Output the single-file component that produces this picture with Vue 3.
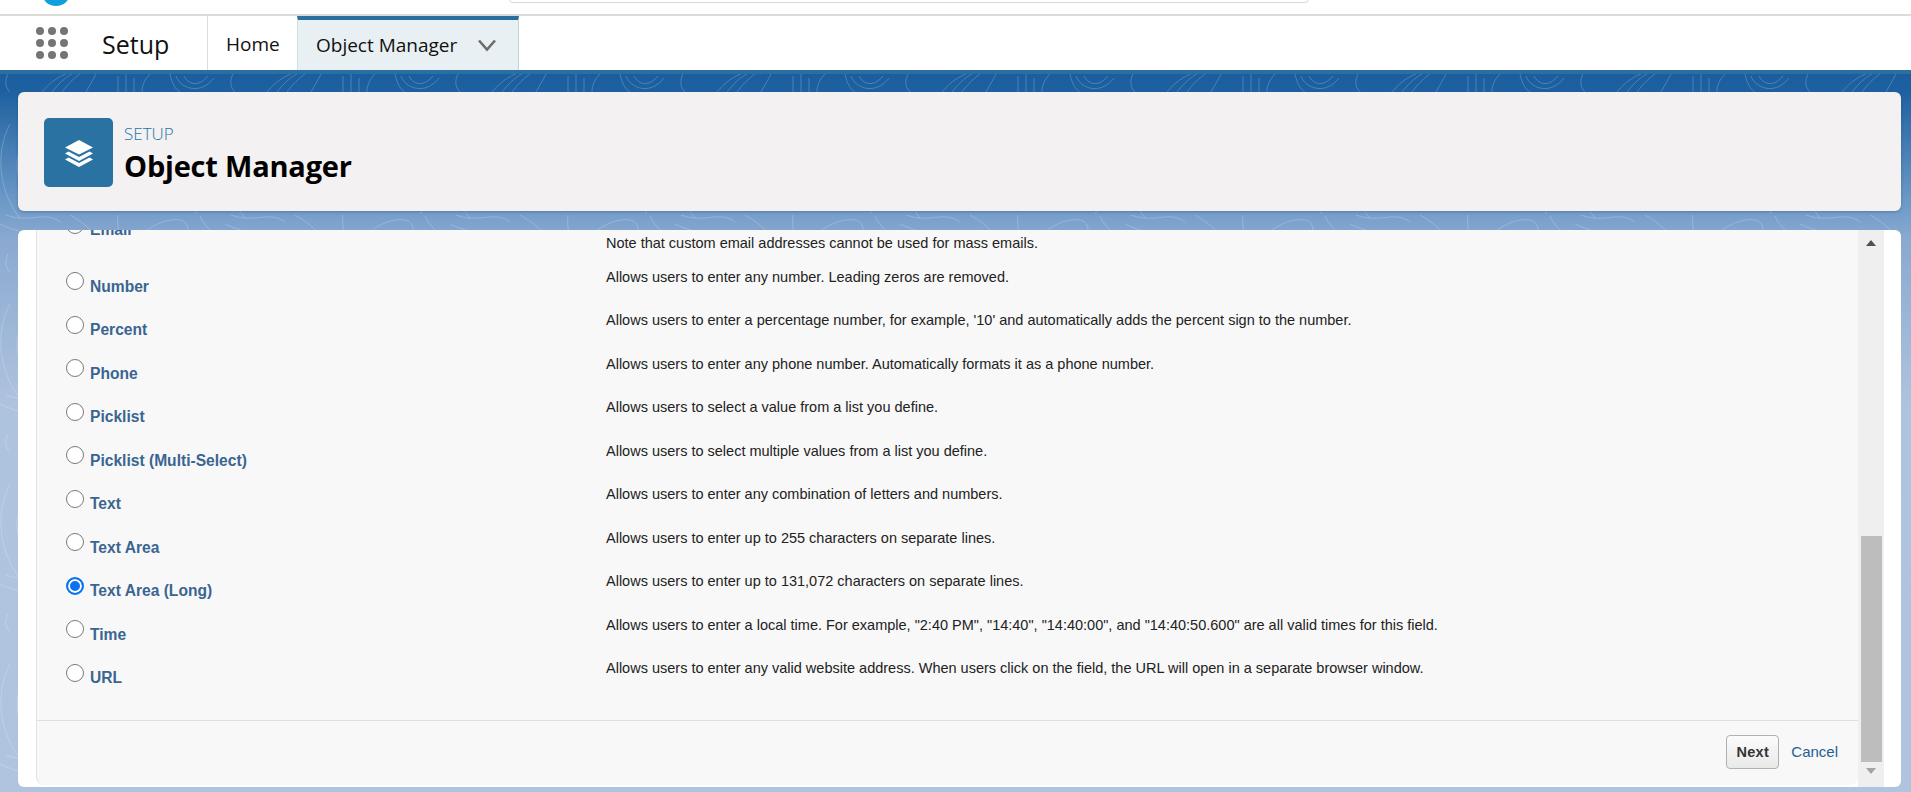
<script setup>
const rows = [
  { label: 'Number', desc: 'Allows users to enter any number. Leading zeros are removed.' },
  { label: 'Percent', desc: "Allows users to enter a percentage number, for example, '10' and automatically adds the percent sign to the number." },
  { label: 'Phone', desc: 'Allows users to enter any phone number. Automatically formats it as a phone number.' },
  { label: 'Picklist', desc: 'Allows users to select a value from a list you define.' },
  { label: 'Picklist (Multi-Select)', desc: 'Allows users to select multiple values from a list you define.' },
  { label: 'Text', desc: 'Allows users to enter any combination of letters and numbers.' },
  { label: 'Text Area', desc: 'Allows users to enter up to 255 characters on separate lines.' },
  { label: 'Text Area (Long)', desc: 'Allows users to enter up to 131,072 characters on separate lines.', checked: true },
  { label: 'Time', desc: 'Allows users to enter a local time. For example, "2:40 PM", "14:40", "14:40:00", and "14:40:50.600" are all valid times for this field.' },
  { label: 'URL', desc: 'Allows users to enter any valid website address. When users click on the field, the URL will open in a separate browser window.' },
]
</script>

<template>
  <div class="page">
    <div class="topbar"><span class="logo"></span><span class="search"></span></div>
    <nav class="nav">
      <div class="launcher">
        <svg width="34" height="32" viewBox="0 0 34 32" fill="#757575">
          <template v-for="y in [4,16,28]" :key="y">
            <circle v-for="x in [4,16,28]" :key="x" :cx="x" :cy="y" r="4" />
          </template>
        </svg>
      </div>
      <div class="app-name">Setup</div>
      <div class="tab home">Home</div>
      <div class="tab active">
        <span>Object Manager</span>
        <svg width="20" height="14" viewBox="0 0 20 14" fill="none" stroke="#6f6d6b" stroke-width="2.6"><path d="M2 2.500l8 9 8-9" /></svg>
      </div>
    </nav>
    <main class="stage">
      <svg class="topo" width="1911" height="718" aria-hidden="true">
        <defs>
          <pattern id="topo" width="225" height="180" patternUnits="userSpaceOnUse">
            <g fill="none" stroke="#fff" stroke-opacity=".2" stroke-width="1">
              <path d="M8 0C4 8 6 14 10 18M42 18C50 8 60 2 66 0M52 18C60 8 66 3 72 0M62 18C68 10 74 4 80 0M96 0C92 8 88 14 86 18M118 2V18M126 0V18M134 4V18M150 0C144 6 142 12 142 18M176 2C180 14 200 22 214 4M184 2C188 10 198 14 208 2M170 0C172 10 176 16 180 18" />
              <path d="M6 141C30 150 44 136 60 148M70 141C86 150 96 160 100 170M118 141C116 152 122 160 114 170M136 170C146 150 170 144 180 146C190 148 190 160 184 170M200 142C204 152 214 160 225 168M0 150C20 160 36 158 44 170" />
              <path d="M30 60C10 80 14 110 36 130M10 50C-6 80 0 120 20 144M190 40C215 70 215 110 195 140" />
            </g>
          </pattern>
        </defs>
        <rect width="1911" height="718" fill="url(#topo)" />
      </svg>
      <header class="head">
        <div class="obj-icon">
          <svg width="34" height="34" viewBox="0 0 34 34" fill="#fff">
            <path d="M17 4L31 11.500 17 18.500 3 11.500Z" />
            <path d="M6.500 15.500L3 17.500 17 25 31 17.500 27.500 15.500 17 21Z" />
            <path d="M6.500 21.500L3 23.500 17 31 31 23.500 27.500 21.500 17 27Z" />
          </svg>
        </div>
        <div class="titles">
          <div class="eyebrow">SETUP</div>
          <h1>Object Manager</h1>
        </div>
      </header>
      <section class="card">
        <div class="inner">
          <div class="scroll-area">
            <div class="list">
              <div class="row email">
                <div class="type"><span class="radio"></span><span class="lbl">Email</span></div>
                <div class="desc">Note that custom email addresses cannot be used for mass emails.</div>
              </div>
              <div v-for="r in rows" :key="r.label" class="row">
                <div class="type">
                  <span class="radio" :class="{ on: r.checked }"></span>
                  <span class="lbl">{{ r.label }}</span>
                </div>
                <div class="desc">{{ r.desc }}</div>
              </div>
            </div>
          </div>
          <footer class="foot">
            <button class="next">Next</button>
            <a class="cancel">Cancel</a>
          </footer>
        </div>
        <div class="scrollbar">
          <span class="arrow up"></span>
          <span class="thumb"></span>
          <span class="arrow down"></span>
        </div>
      </section>
    </main>
  </div>
</template>

<style>
html, body { margin: 0; background: #fff; overflow: hidden; }
</style>

<style scoped>
.page { width: 1911px; height: 792px; display: flex; flex-direction: column; overflow: hidden; font-family: "Liberation Sans", Arial, sans-serif; }
.topbar { height: 14px; flex: none; border-bottom: 2px solid #dddbda; position: relative; display: flex; background: #fff; }
.logo { position: absolute; left: 42px; top: -20px; width: 28px; height: 26px; border-radius: 50%; background: #11a0de; }
.search { position: absolute; left: 509px; top: -10px; width: 798px; height: 11px; border: 1px solid #d8d8d8; border-radius: 4px; }
.nav { height: 54px; flex: none; display: flex; align-items: stretch; background: #fff; font-family: "Open Sans", sans-serif; color: #111; }
.launcher { width: 102px; padding: 11px 0 0 36px; box-sizing: border-box; flex: none; }
.app-name { width: 106px; box-sizing: border-box; font-size: 25px; line-height: 56px; flex: none; border-right: 1px solid #dddbda; }
.tab { font-size: 19px; line-height: 56px; flex: none; box-sizing: border-box; }
.home { width: 89px; padding-left: 18px; }
.active { width: 222px; padding-left: 18px; display: flex; align-items: center; gap: 20px; background: #e9f0f4; border-top: 4px solid #2a6f9f; border-left: 1px solid #d5dbdf; border-right: 1px solid #c9d0d5; line-height: 46px; }
.stage { flex: 1; position: relative; display: flex; flex-direction: column; gap: 19px; padding: 18px 10px 5px 18px; box-sizing: border-box; min-height: 0; border-top: 4px solid #2a6f9f; background: linear-gradient(180deg, #1b5e9f 0, #1e61a1 18px, #6e9ac8 130px, #8aa9d0 165px, #aec3de 330px, #b0c4df 718px); }
.topo { position: absolute; left: 0; top: 0; }
.head { position: relative; height: 119px; flex: none; display: flex; align-items: center; gap: 11px; padding: 2px 0 0 26px; box-sizing: border-box; background: #f3f1f2; border-radius: 6px; box-shadow: 0 1px 3px rgba(40, 60, 90, .35); }
.obj-icon { width: 69px; height: 69px; border-radius: 5px; background: #2a72a1; display: flex; align-items: center; justify-content: center; }
.titles { display: flex; flex-direction: column; color: #000; margin-top: 4px; }
.eyebrow { font-family: "Open Sans", sans-serif; font-size: 17px; line-height: 20px; color: #2874a6; font-weight: 300; }
h1 { margin: 3px 0 0; font-family: "Open Sans", sans-serif; font-size: 29px; line-height: 38px; font-weight: 700; letter-spacing: -.2px; }
.card { position: relative; flex: 1; min-height: 0; display: flex; background: #fff; border-radius: 6px; padding-left: 18px; overflow: hidden; }
.inner { flex: 1; min-width: 0; display: flex; flex-direction: column; background: #f8f8f8; border-left: 1px solid #e2e2e2; border-radius: 0 0 8px 8px; margin-bottom: 2px; }
.scroll-area { flex: 1; min-height: 0; overflow: hidden; }
.list { margin-top: -34.500px; }
.row { display: grid; grid-template-columns: 569px 1fr; height: 43.500px; }
.row.email { height: 56.500px; }
.type { display: flex; position: relative; height: 100%; }
.radio { position: absolute; left: 29px; top: 20px; width: 18px; height: 18px; box-sizing: border-box; border: 1.500px solid #7a7a7a; border-radius: 50%; background: #fff; }
.radio.on { border: 2px solid #0b72f0; background: #0b72f0; box-shadow: inset 0 0 0 2px #fff; }
.lbl { position: absolute; left: 53px; top: 25.500px; font-size: 15.600px; line-height: 18px; font-weight: 700; color: #3a6591; white-space: nowrap; }
.desc { padding-top: 16.500px; font-size: 14.500px; line-height: 17px; color: #222; white-space: nowrap; }
.email .desc { padding-top: 39px; }
.foot { height: 65px; flex: none; display: flex; align-items: center; justify-content: flex-end; gap: 12px; padding: 0 20px 3px 0; box-sizing: border-box; border-top: 1px solid #dfdfdf; }
.next { width: 53px; height: 34px; padding: 0; border: 1px solid #b0b0b0; border-radius: 4px; background: linear-gradient(180deg, #fbfbfb, #e9e9e9); font: 700 14.500px "Liberation Sans", sans-serif; color: #333; letter-spacing: .3px; }
.cancel { font-size: 15px; color: #1e6091; }
.scrollbar { width: 26px; flex: none; margin-right: 17px; background: #efefef; position: relative; }
.arrow { position: absolute; left: 8px; width: 0; height: 0; border-left: 5.500px solid transparent; border-right: 5.500px solid transparent; }
.up { top: 10px; border-bottom: 6px solid #505050; }
.down { bottom: 13px; border-top: 6px solid #a3a3a3; }
.thumb { position: absolute; left: 3px; right: 2px; top: 306px; bottom: 25px; background: #bdbdbd; }
</style>
